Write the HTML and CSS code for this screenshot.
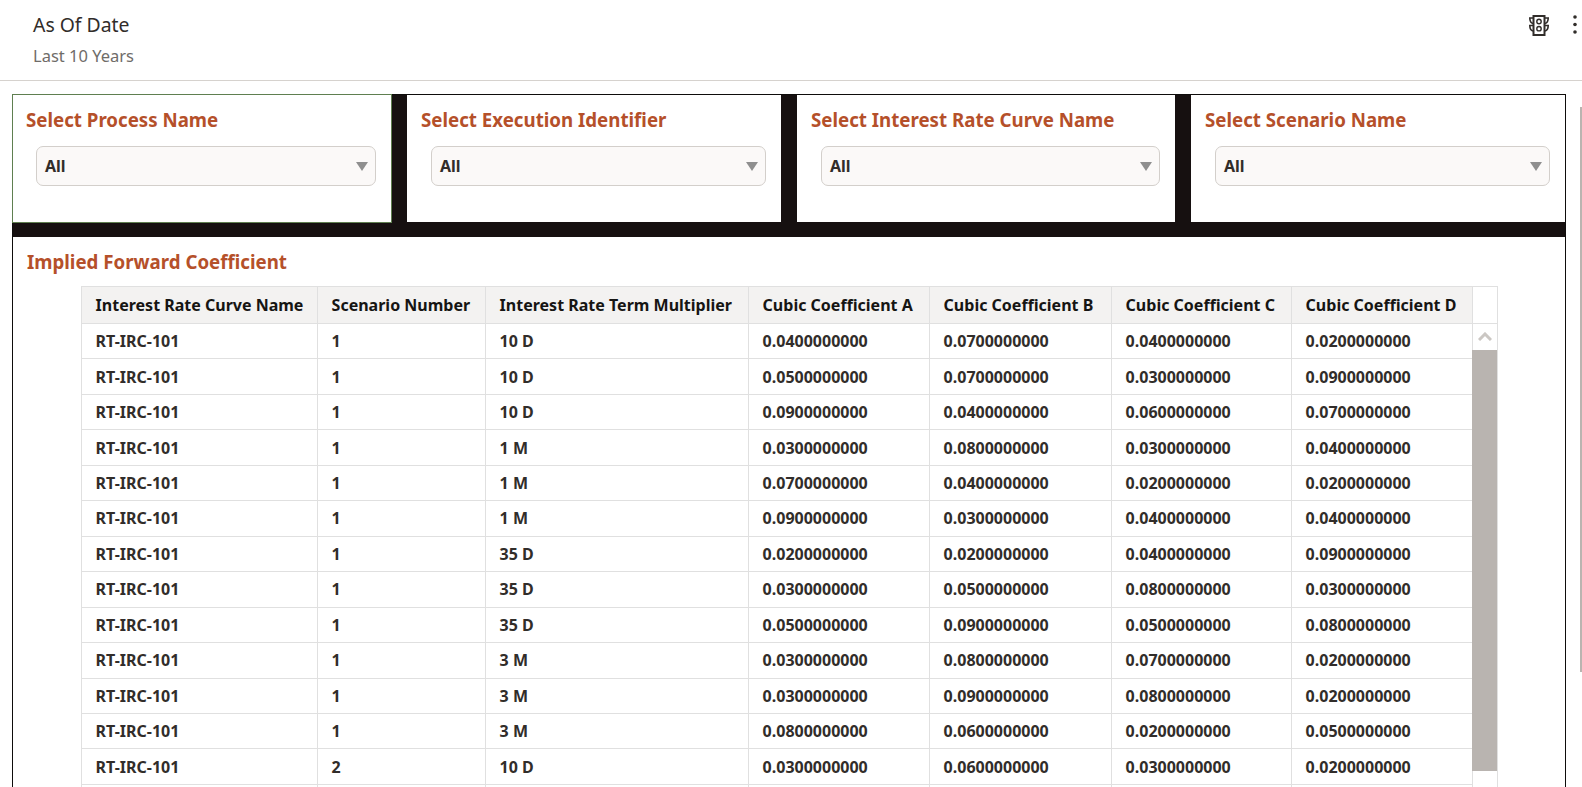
FILE: index.html
```html
<!doctype html>
<html>
    <head>
        <meta charset="utf-8">
        <link rel="stylesheet" href="styles.css">
    </head>

    <body>
    <div class="page-header">
        <div class="page-info">
            <div class="page-title">As Of Date</div>
            <div class="page-subtitle">Last 10 Years</div>
        </div>
        <div class="page-actions">
            <svg class="icon-filters" width="20" height="21" viewBox="0 0 20 21" fill="none" stroke="#312d2a">
                <rect x="4.5" y="1" width="11" height="19" stroke-width="2"/>
                <circle cx="10" cy="6.5" r="2.2" stroke-width="1.4"/>
                <circle cx="10" cy="13.7" r="2.2" stroke-width="1.4"/>
                <path d="M4 3H.8C.8 6 1.800 8 4 8.500M16 3h3.200C19.200 6 18.200 8 16 8.500M4 10.500H.8C.8 13.500 1.800 15.500 4 16M16 10.500h3.200C19.200 13.500 18.200 15.500 16 16" stroke-width="1.600"/>
            </svg>
            <svg class="icon-more" width="4" height="19" viewBox="0 0 4 19" fill="#312d2a">
                <circle cx="2" cy="2" r="1.800"/>
                <circle cx="2" cy="9.500" r="1.800"/>
                <circle cx="2" cy="17" r="1.800"/>
            </svg>
        </div>
    </div>

    <div class="dashboard">
        <div class="filters">
            <div class="filter filter-active">
                <div class="section-title">Select Process Name</div>
                <div class="select-box">All</div>
            </div>
            <div class="filter">
                <div class="section-title">Select Execution Identifier</div>
                <div class="select-box">All</div>
            </div>
            <div class="filter">
                <div class="section-title">Select Interest Rate Curve Name</div>
                <div class="select-box">All</div>
            </div>
            <div class="filter">
                <div class="section-title">Select Scenario Name</div>
                <div class="select-box">All</div>
            </div>
        </div>

        <div class="report">
            <div class="section-title">Implied Forward Coefficient</div>
            <div class="table-wrap">
                <table class="data-table">
                    <colgroup>
                        <col class="col-curve">
                        <col class="col-scenario">
                        <col class="col-term">
                        <col class="col-cubic-a">
                        <col class="col-cubic-b">
                        <col class="col-cubic-c">
                        <col class="col-cubic-d">
                        <col class="col-gutter">
                    </colgroup>
                    <thead>
                        <tr>
                            <th>Interest Rate Curve Name</th>
                            <th>Scenario Number</th>
                            <th>Interest Rate Term Multiplier</th>
                            <th>Cubic Coefficient A</th>
                            <th>Cubic Coefficient B</th>
                            <th>Cubic Coefficient C</th>
                            <th>Cubic Coefficient D</th>
                            <th class="gutter"></th>
                        </tr>
                    </thead>
                    <tbody>
                        <tr><td>RT-IRC-101</td><td>1</td><td>10 D</td><td>0.0400000000</td><td>0.0700000000</td><td>0.0400000000</td><td>0.0200000000</td><td class="gutter"></td></tr>
                        <tr><td>RT-IRC-101</td><td>1</td><td>10 D</td><td>0.0500000000</td><td>0.0700000000</td><td>0.0300000000</td><td>0.0900000000</td><td class="gutter"></td></tr>
                        <tr><td>RT-IRC-101</td><td>1</td><td>10 D</td><td>0.0900000000</td><td>0.0400000000</td><td>0.0600000000</td><td>0.0700000000</td><td class="gutter"></td></tr>
                        <tr><td>RT-IRC-101</td><td>1</td><td>1 M</td><td>0.0300000000</td><td>0.0800000000</td><td>0.0300000000</td><td>0.0400000000</td><td class="gutter"></td></tr>
                        <tr><td>RT-IRC-101</td><td>1</td><td>1 M</td><td>0.0700000000</td><td>0.0400000000</td><td>0.0200000000</td><td>0.0200000000</td><td class="gutter"></td></tr>
                        <tr><td>RT-IRC-101</td><td>1</td><td>1 M</td><td>0.0900000000</td><td>0.0300000000</td><td>0.0400000000</td><td>0.0400000000</td><td class="gutter"></td></tr>
                        <tr><td>RT-IRC-101</td><td>1</td><td>35 D</td><td>0.0200000000</td><td>0.0200000000</td><td>0.0400000000</td><td>0.0900000000</td><td class="gutter"></td></tr>
                        <tr><td>RT-IRC-101</td><td>1</td><td>35 D</td><td>0.0300000000</td><td>0.0500000000</td><td>0.0800000000</td><td>0.0300000000</td><td class="gutter"></td></tr>
                        <tr><td>RT-IRC-101</td><td>1</td><td>35 D</td><td>0.0500000000</td><td>0.0900000000</td><td>0.0500000000</td><td>0.0800000000</td><td class="gutter"></td></tr>
                        <tr><td>RT-IRC-101</td><td>1</td><td>3 M</td><td>0.0300000000</td><td>0.0800000000</td><td>0.0700000000</td><td>0.0200000000</td><td class="gutter"></td></tr>
                        <tr><td>RT-IRC-101</td><td>1</td><td>3 M</td><td>0.0300000000</td><td>0.0900000000</td><td>0.0800000000</td><td>0.0200000000</td><td class="gutter"></td></tr>
                        <tr><td>RT-IRC-101</td><td>1</td><td>3 M</td><td>0.0800000000</td><td>0.0600000000</td><td>0.0200000000</td><td>0.0500000000</td><td class="gutter"></td></tr>
                        <tr><td>RT-IRC-101</td><td>2</td><td>10 D</td><td>0.0300000000</td><td>0.0600000000</td><td>0.0300000000</td><td>0.0200000000</td><td class="gutter"></td></tr>
                        <tr><td></td><td></td><td></td><td></td><td></td><td></td><td></td><td class="gutter"></td></tr>
                    </tbody>
                </table>
                <div class="table-scroll">
                    <svg class="scroll-up" width="14" height="9" viewBox="0 0 14 9" fill="none" stroke="#cbc7c3" stroke-width="3">
                        <path d="M1 8L7 2l6 6"/>
                    </svg>
                    <div class="scroll-thumb"></div>
                </div>
            </div>
        </div>
    </div>

    <div class="page-scroll"></div>
    </body>
</html>
```

FILE: styles.css
```css
html, body {
    height: 100%;
}

body {
    margin: 0;
    font-family: "Noto Sans", sans-serif;
    color: #312d2a;
    background-color: white;
    overflow: hidden;
}

* {
    box-sizing: border-box;
}

/* ===== Header ===== */
.page-header {
    display: flex;
    justify-content: space-between;
    height: 81px;
    padding: 13px 5px 0 33px;
    border-bottom: 1px solid #d6d2ce;
}

.page-title {
    font-size: 19.400px;
    line-height: 24px;
}

.page-subtitle {
    margin-top: 9px;
    font-size: 16.500px;
    line-height: 20px;
    color: #6f6c69;
}

.page-actions {
    display: flex;
    align-items: flex-start;
    gap: 24px;
    padding-top: 2px;
}

/* ===== Dashboard ===== */
.dashboard {
    margin: 13px 16px 0 12px;
    border: 1px solid #0e0c0b;
    border-bottom: 0;
}

.filters {
    display: grid;
    grid-template-columns: 378px 374px 378px 374px;
    column-gap: 16px;
    height: 142px;
    padding-bottom: 15px;
    background-color: #161010;
}

.filter {
    padding: 12px 15px 0 24px;
    background-color: white;
}

.filter-active {
    padding-left: 23px;
    outline: 1px solid #5f7f50;
}

.section-title {
    margin-left: -10px;
    font-size: 18.700px;
    font-weight: 700;
    line-height: 26px;
    color: #b5502a;
}

.select-box {
    position: relative;
    height: 40px;
    margin-top: 13px;
    padding-left: 8px;
    border: 1px solid #d3cfcb;
    border-radius: 7px;
    background-color: #fbf9f8;
    font-size: 16px;
    font-weight: 700;
    line-height: 38px;
}

.select-box::after {
    content: "";
    position: absolute;
    top: 15px;
    right: 7px;
    border-top: 9px solid #8f8f8f;
    border-left: 6.500px solid transparent;
    border-right: 6.500px solid transparent;
}

/* ===== Report ===== */
.report {
    padding: 12px 0 0 24px;
}

.table-wrap {
    position: relative;
    width: 1417px;
    margin: 11px 0 0 44px;
    border-right: 1px solid #e0e0e0;
}

.data-table {
    width: 100%;
    table-layout: fixed;
    border-collapse: separate;
    border-spacing: 0;
    font-size: 16px;
    font-weight: 700;
    border-top: 1px solid #e0e0e0;
    border-left: 1px solid #e0e0e0;
}

.col-curve { width: 236px; }
.col-scenario { width: 168px; }
.col-term { width: 263px; }
.col-cubic-a { width: 181px; }
.col-cubic-b { width: 182px; }
.col-cubic-c { width: 180px; }
.col-cubic-d { width: 181px; }
.col-gutter { width: 24px; }

.data-table th,
.data-table td {
    padding: 0 0 0 13.600px;
    border-right: 1px solid #e0e0e0;
    border-bottom: 1px solid #e0e0e0;
    text-align: left;
    white-space: nowrap;
}

.data-table th {
    height: 37px;
    color: #161513;
    background-color: #f3f2f1;
}

.data-table td {
    height: 35.460px;
}

.data-table .gutter {
    border-right: 0;
    background-color: white;
}

.data-table td.gutter {
    border-bottom: 0;
}

/* lies over the gutter column of the table */
.table-scroll {
    position: absolute;
    top: 37px;
    right: 0;
    bottom: 0;
    width: 25px;
    padding-top: 9px;
    text-align: center;
}

.scroll-up {
    display: block;
    margin: 0 auto;
}

.scroll-thumb {
    height: 421px;
    margin-top: 9px;
    background-color: #b9b4b0;
}

.page-scroll {
    position: absolute;
    top: 107px;
    right: 0;
    width: 2px;
    height: 565px;
    background-color: #b9b4b0;
}
```
